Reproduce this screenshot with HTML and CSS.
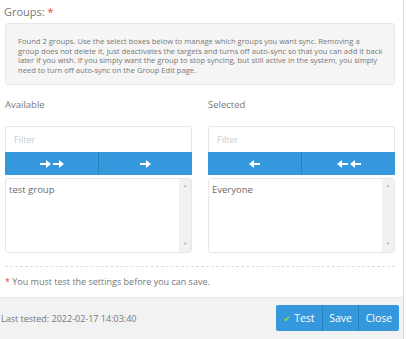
FILE: index.html
```html
<!DOCTYPE html>
<html lang="en">
<head>
    <meta charset="UTF-8">
    <meta name="viewport" content="width=device-width, initial-scale=1.0">
    <title>Groups</title>
    <link rel="stylesheet" href="styles.css">
</head>
<body>
    <div class="modal">
        <div class="modal-body">
            <div class="field-label">Groups: <span class="req">*</span></div>
            <div class="well">
                Found 2 groups. Use the select boxes below to manage which groups you want sync. Removing a<br>
                group does not delete it, just deactivates the targets and turns off auto-sync so that you can add it back<br>
                later if you wish. If you simply want the group to stop syncing, but still active in the system, you simply<br>
                need to turn off auto-sync on the Group Edit page.
            </div>
            <div class="dual">
                <div class="side">
                    <div class="side-label">Available</div>
                    <input class="filter" type="text" placeholder="Filter">
                    <div class="btn-bar">
                        <button class="move">
                            <svg width="11" height="8" viewBox="0 0 11 8"><path d="M0 3h6V0l5 4-5 4V5H0z" fill="#fff"/></svg>
                            <svg width="11" height="8" viewBox="0 0 11 8"><path d="M0 3h6V0l5 4-5 4V5H0z" fill="#fff"/></svg>
                        </button>
                        <button class="move">
                            <svg width="11" height="8" viewBox="0 0 11 8"><path d="M0 3h6V0l5 4-5 4V5H0z" fill="#fff"/></svg>
                        </button>
                    </div>
                    <div class="listbox">
                        <div class="options"><div>test group</div></div>
                        <div class="scroll"><span>&#9650;</span><span>&#9660;</span></div>
                    </div>
                </div>
                <div class="side">
                    <div class="side-label">Selected</div>
                    <input class="filter" type="text" placeholder="Filter">
                    <div class="btn-bar">
                        <button class="move">
                            <svg width="11" height="8" viewBox="0 0 11 8"><path d="M11 3H5V0L0 4l5 4V5h6z" fill="#fff"/></svg>
                        </button>
                        <button class="move">
                            <svg width="11" height="8" viewBox="0 0 11 8"><path d="M11 3H5V0L0 4l5 4V5h6z" fill="#fff"/></svg>
                            <svg width="11" height="8" viewBox="0 0 11 8"><path d="M11 3H5V0L0 4l5 4V5h6z" fill="#fff"/></svg>
                        </button>
                    </div>
                    <div class="listbox">
                        <div class="options"><div>Everyone</div></div>
                        <div class="scroll"><span>&#9650;</span><span>&#9660;</span></div>
                    </div>
                </div>
            </div>
            <div class="note"><span class="req">*</span> You must test the settings before you can save.</div>
        </div>
        <div class="modal-footer">
            <div class="tested">Last tested: 2022-02-17 14:03:40</div>
            <div class="actions">
                <button class="btn btn-test"><span class="check">&#10004;</span> Test</button>
                <button class="btn btn-save">Save</button>
                <button class="btn btn-close">Close</button>
            </div>
        </div>
    </div>
</body>
</html>
```

FILE: styles.css
```css
body {
    margin: 0;
    background: #fff;
    font-family: "Open Sans", "Liberation Sans", sans-serif;
    color: #777;
}
.modal {
    width: 403px;
    height: 339px;
    border-right: 1px solid #dcdcdc;
    display: flex;
    flex-direction: column;
}
.modal-body {
    padding: 4px 8px 0 5px;
    flex: 1;
}
.field-label {
    font-size: 11px;
    line-height: 16px;
    margin-left: -1px;
}
.req {
    color: #e74c3c;
}
.well {
    margin-top: 3px;
    height: 62px;
    box-sizing: border-box;
    padding: 13px 0 0 12px;
    background: #f5f5f5;
    border: 1px solid #e6e6e6;
    border-radius: 3px;
    font-size: 7.6px;
    line-height: 9.7px;
    color: #777;
}
.dual {
    display: grid;
    grid-template-columns: 187px 187px;
    column-gap: 16px;
    margin-top: 13px;
}
.side-label {
    font-size: 9.5px;
    line-height: 14px;
    margin-bottom: 14px;
}
.filter {
    display: block;
    width: 100%;
    height: 26px;
    box-sizing: border-box;
    border: 1px solid #e6e6e6;
    border-bottom: none;
    border-radius: 3px 3px 0 0;
    padding: 0 8px;
    font-family: inherit;
    font-size: 9px;
    outline: none;
}
.filter::placeholder {
    color: #ccc;
}
.btn-bar {
    display: flex;
    height: 23px;
    background: #3598dc;
}
.move {
    flex: 1;
    border: none;
    background: none;
    padding: 0;
    display: flex;
    justify-content: center;
    align-items: center;
    gap: 2px;
}
.move + .move {
    border-left: 1px solid #2a7fb9;
}
.listbox {
    margin-top: 3px;
    height: 75px;
    box-sizing: border-box;
    border: 1px solid #e6e6e6;
    border-radius: 3px;
    display: flex;
}
.options {
    flex: 1;
    padding: 5px 3px;
    font-size: 9.5px;
    line-height: 12px;
    color: #6a6a6a;
}
.scroll {
    width: 12px;
    background: #f1f1f1;
    display: flex;
    flex-direction: column;
    justify-content: space-between;
    align-items: center;
    padding: 4px 0 6px;
    font-size: 4px;
    color: #a9a9a9;
}
.note {
    margin-top: 13px;
    border-top: 1px dashed #ddd;
    padding-top: 9px;
    font-size: 9px;
    line-height: 12px;
}
.modal-footer {
    height: 42px;
    box-sizing: border-box;
    background: #f2f2f2;
    border-top: 1px solid #e6e6e6;
    display: flex;
    justify-content: space-between;
    align-items: center;
    padding: 0 4px 1px 1px;
}
.tested {
    font-size: 9px;
}
.actions {
    display: flex;
    height: 26px;
    border-radius: 2px;
    overflow: hidden;
}
.btn {
    border: none;
    background: #3598dc;
    color: #fff;
    font-family: inherit;
    font-size: 10.5px;
    padding: 0;
    text-align: center;
}
.btn + .btn {
    border-left: 1px solid #2a7fb9;
}
.btn-test {
    width: 46px;
}
.btn-save {
    width: 36px;
}
.btn-close {
    width: 41px;
}
.check {
    color: #8ed460;
    font-size: 9px;
}
```
